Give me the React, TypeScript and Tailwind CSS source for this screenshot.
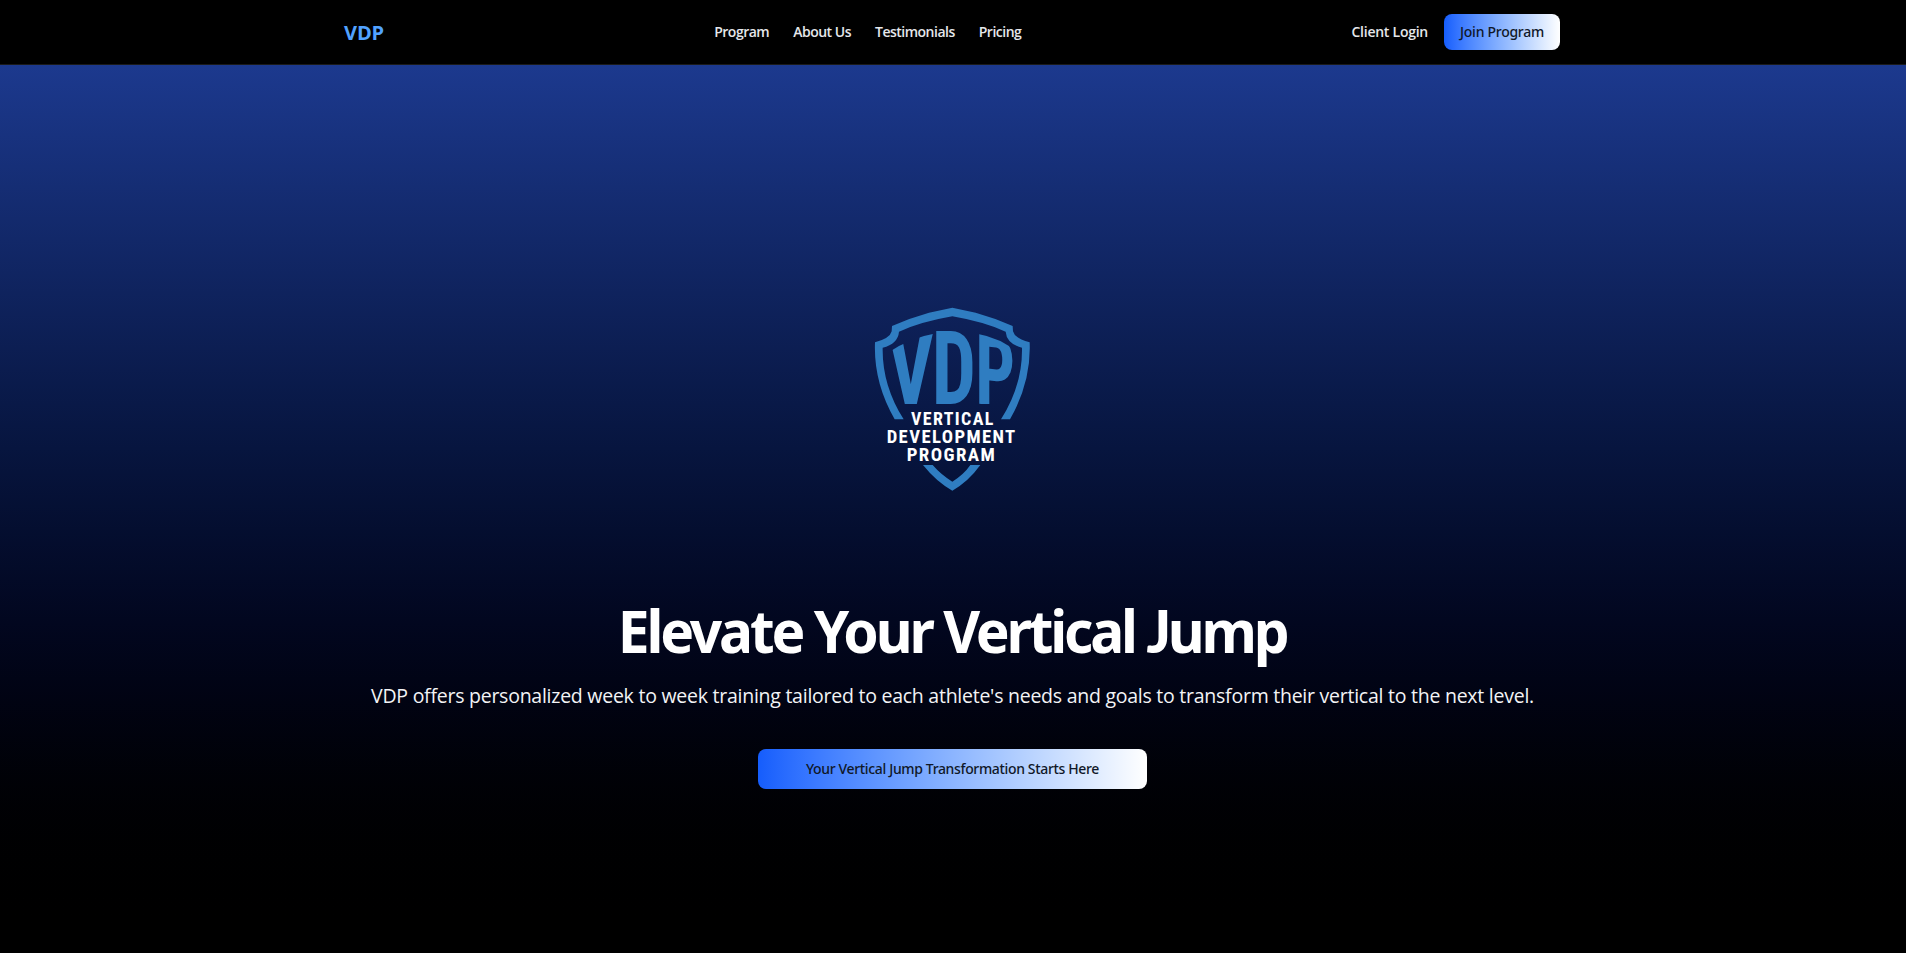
const links = ["Program", "About Us", "Testimonials", "Pricing"];

function Logo() {
  return (
    <svg viewBox="0 0 552 615" width="184" height="205" className="mr-px block" role="img" aria-label="VDP">
      <defs>
        <clipPath id="arch-v">
          <path d="M86 172 Q150 128 222 116 L222 327 L86 327 Z" />
        </clipPath>
        <clipPath id="arch-p">
          <path d="M345 115 Q430 130 480 180 L480 327 L345 327 Z" />
        </clipPath>
      </defs>
      <g fill="#2f7dc1">
        <path d="M277 38 L347 53 Q405 69 458 93 L459 109 Q464 130 509 142 Q514 262 450 373 L423 373 Q488 270 486 158 Q440 146 437 110 Q370 80 277 64 Q184 80 117 110 Q114 146 68 158 Q66 270 131 373 L104 373 Q40 262 45 142 Q90 130 95 109 L96 93 Q149 69 207 53 Z" />
        <path d="M189 510 L218 510 Q242 538 277 560 Q312 538 331 510 L361 510 Q325 560 277 587 Q229 560 189 510 Z" />
      </g>
      <g fill="#2f7dc1" className="font-['Roboto_Condensed',Roboto,sans-serif] text-[100px] font-bold">
        <g clipPath="url(#arch-v)">
          <text transform="matrix(2.45 0 0 3.1 82 327)">V</text>
        </g>
        <text transform="matrix(2.35 0 0 3.05 215 326)">D</text>
        <g clipPath="url(#arch-p)">
          <text transform="matrix(2.1 0.25 0 2.95 346 325)">P</text>
        </g>
      </g>
      <g fill="#fff" className="font-['Roboto_Condensed',Roboto,sans-serif] text-[53px] font-bold tracking-[4px]">
        <text x="153" y="390" textLength="251" lengthAdjust="spacingAndGlyphs">VERTICAL</text>
        <text x="80" y="444" textLength="390" lengthAdjust="spacingAndGlyphs">DEVELOPMENT</text>
        <text x="140" y="497" textLength="269" lengthAdjust="spacingAndGlyphs">PROGRAM</text>
      </g>
    </svg>
  );
}

export default function App() {
  return (
    <div className="flex h-[953px] flex-col bg-black font-['Open_Sans','Noto_Sans',sans-serif] text-white">
      <header className="h-[65px] border-b border-[#1a1a1a] bg-black pr-[2px]">
        <div className="mx-auto flex h-16 max-w-7xl items-center justify-between px-8">
          <a className="pt-0.5 text-xl font-bold tracking-[-0.1px] text-[#51a2ff]">VDP</a>
          <nav className="flex gap-6 text-sm font-semibold tracking-[-0.5px] text-gray-200">
            {links.map((l) => (
              <a key={l}>{l}</a>
            ))}
          </nav>
          <div className="flex items-center gap-4 text-sm">
            <a className="font-semibold tracking-[-0.25px] text-gray-200">Client Login</a>
            <a className="flex h-9 w-[116px] items-center justify-center rounded-lg bg-linear-to-r from-[#155dfc] to-white font-['Noto_Sans'] font-medium tracking-[-0.27px] whitespace-nowrap text-gray-900">
              Join Program
            </a>
          </div>
        </div>
      </header>
      <main className="flex flex-1 flex-col items-center bg-linear-to-b from-[#1c398e] to-black pt-[230px] pr-px">
        <Logo />
        <h1 className="mt-[100px] h-[61px] scale-x-[0.963] font-['Noto_Sans'] text-[59px] leading-[60px] font-bold tracking-[-3.3px] whitespace-nowrap">
          Elevate Your Vertical <span className="font-['Lato'] leading-none font-black">J</span>ump
        </h1>
        <p className="mt-[21px] text-[19.5px] leading-7 tracking-[-0.25px] whitespace-nowrap text-gray-100">
          VDP offers personalized week to week training tailored to each athlete's needs and goals to transform their
          vertical to the next level.
        </p>
        <a className="mt-[39px] flex h-10 w-[389px] items-center justify-center rounded-lg bg-linear-to-r from-[#155dfc] to-white font-['Noto_Sans'] text-sm font-medium tracking-[-0.35px] text-gray-900">
          Your Vertical Jump Transformation Starts Here
        </a>
      </main>
    </div>
  );
}
